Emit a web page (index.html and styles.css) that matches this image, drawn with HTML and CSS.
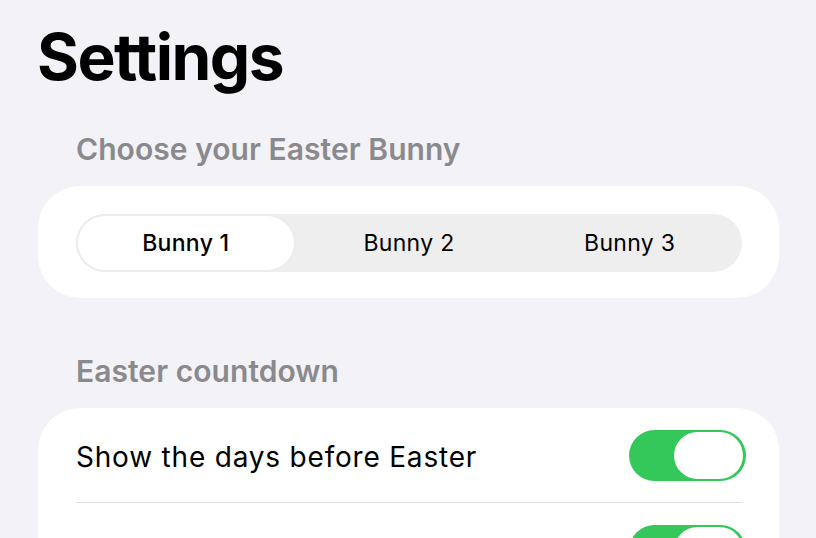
FILE: index.html
```html
<!DOCTYPE html>
<html lang="en">
<head>
<meta charset="utf-8">
<title>Settings</title>
<link rel="stylesheet" href="styles.css">
</head>
<body>
<main class="page">
  <h1 class="title">Settings</h1>

  <h2 class="section-header">Choose your Easter Bunny</h2>
  <section class="card card-segment">
    <div class="segmented" role="tablist">
      <button class="segment is-selected" role="tab" aria-selected="true">Bunny 1</button>
      <button class="segment" role="tab" aria-selected="false">Bunny 2</button>
      <button class="segment" role="tab" aria-selected="false">Bunny 3</button>
    </div>
  </section>

  <h2 class="section-header">Easter countdown</h2>
  <section class="card card-list">
    <div class="row">
      <span class="row-label">Show the days before Easter</span>
      <span class="toggle is-on" role="switch" aria-checked="true"><span class="knob"></span></span>
    </div>
    <div class="row">
      <span class="row-label">Remind me on Easter morning</span>
      <span class="toggle is-on" role="switch" aria-checked="true"><span class="knob"></span></span>
    </div>
  </section>
</main>
</body>
</html>
```

FILE: styles.css
```css
* {
  box-sizing: border-box;
}

html, body {
  margin: 0;
  padding: 0;
}

body {
  background: #f2f2f7;
  font-family: "Inter", "Noto Sans", "Liberation Sans", sans-serif;
  color: #000;
  overflow: hidden;
}

.page {
  padding: 19px 37px 0 38px;
}

.title {
  margin: 0 0 36px -1px;
  font-size: 64px;
  line-height: 76px;
  font-weight: 700;
  letter-spacing: -1.5px;
}

.section-header {
  margin: 0 0 19px 38px;
  font-size: 30px;
  line-height: 36px;
  font-weight: 600;
  color: #8a8a8e;
  letter-spacing: 0.05px;
}

.card {
  background: #fff;
  border-radius: 42px;
}

.card-segment {
  padding: 28px 37px 26px 38px;
  margin-bottom: 55px;
}

.segmented {
  display: grid;
  grid-template-columns: 1fr 1fr 1fr;
  height: 58px;
  padding: 2px;
  background: #eeeeef;
  border-radius: 29px;
}

.segment {
  border: 0;
  background: transparent;
  font: inherit;
  font-size: 23px;
  font-weight: 400;
  letter-spacing: 0.3px;
  color: #000;
  border-radius: 27px;
  padding: 0;
}

.segment.is-selected {
  background: #fff;
  font-weight: 500;
  margin-right: 5px;
  box-shadow: 0 0 0 2px #ececee;
}

.card-list {
  padding: 0 37px 0 38px;
}

.row {
  display: flex;
  align-items: center;
  justify-content: space-between;
  height: 94px;
}

.row + .row {
  border-top: 1px solid #e0e0e2;
  height: 95px;
}

.row-label {
  font-size: 28px;
  line-height: 34px;
  padding-top: 4px;
  letter-spacing: 0.8px;
}

.toggle {
  display: flex;
  justify-content: flex-end;
  align-items: center;
  width: 117px;
  height: 51px;
  padding: 2px 3px;
  border-radius: 26px;
  background: #e9e9eb;
  margin-right: -4px;
}

.toggle.is-on {
  background: #34c759;
}

.knob {
  width: 69px;
  height: 47px;
  border-radius: 24px;
  background: #fff;
}
```
